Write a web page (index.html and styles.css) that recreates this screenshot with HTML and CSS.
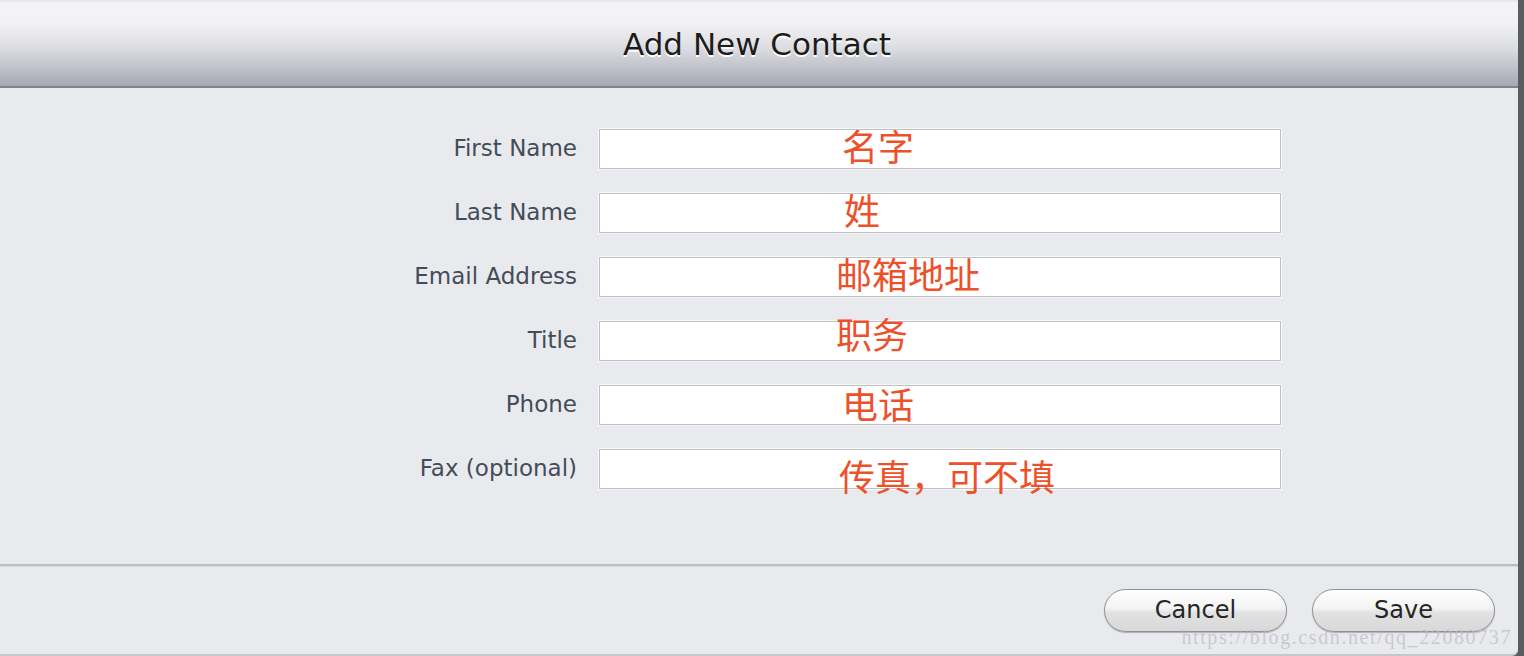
FILE: index.html
```html
<!DOCTYPE html>
<html lang="zh-CN">
<head>
    <meta charset="UTF-8">
    <meta name="viewport" content="width=device-width, initial-scale=1.0">
    <title>Add New Contact</title>
    <link rel="stylesheet" href="styles.css">
</head>
<body>
    <div class="dialog">
        <div class="dialog-header">
            <h1>Add New Contact</h1>
        </div>

        <form class="contact-form">
            <label class="field-label" for="firstName">First Name</label>
            <div class="field">
                <input type="text" id="firstName">
                <span class="note note-first">名字</span>
            </div>

            <label class="field-label" for="lastName">Last Name</label>
            <div class="field">
                <input type="text" id="lastName">
                <span class="note note-last">姓</span>
            </div>

            <label class="field-label" for="email">Email Address</label>
            <div class="field">
                <input type="text" id="email">
                <span class="note note-email">邮箱地址</span>
            </div>

            <label class="field-label" for="title">Title</label>
            <div class="field">
                <input type="text" id="title">
                <span class="note note-title">职务</span>
            </div>

            <label class="field-label" for="phone">Phone</label>
            <div class="field">
                <input type="text" id="phone">
                <span class="note note-phone">电话</span>
            </div>

            <label class="field-label" for="fax">Fax (optional)</label>
            <div class="field">
                <input type="text" id="fax">
                <span class="note note-fax">传真，可不填</span>
            </div>
        </form>

        <div class="dialog-footer">
            <button class="pill-button" type="button">Cancel</button>
            <button class="pill-button" type="button">Save</button>
            <span class="watermark">https://blog.csdn.net/qq_22080737</span>
        </div>
    </div>
</body>
</html>
```

FILE: styles.css
```css
* {
    margin: 0;
    padding: 0;
    box-sizing: border-box;
}

body {
    background: #5b5c60;
    font-family: 'DejaVu Sans', 'Noto Sans CJK SC', sans-serif;
    height: 656px;
    overflow: hidden;
}

.dialog {
    width: 1518px;
    height: 656px;
    background: #e9eaee;
    border-top: 2px solid #e8e9ec;
    border-bottom: 2px solid #c6c7ca;
    border-bottom-right-radius: 6px;
    display: flex;
    flex-direction: column;
}

.dialog-header {
    height: 86px;
    background: linear-gradient(to bottom, #f4f4f6 0%, #f2f2f4 25%, #dcdde1 55%, #bfc0c8 80%, #a5a7b2 100%);
    border-bottom: 2px solid #80838c;
    display: flex;
    align-items: center;
    justify-content: center;
}

.dialog-header h1 {
    font-size: 31px;
    font-weight: normal;
    color: #1c1c1c;
    text-shadow: 0 2px 0 #ffffff;
    margin-left: -4px;
}

.contact-form {
    display: grid;
    grid-template-columns: 577px 682px;
    grid-auto-rows: 40px;
    column-gap: 22px;
    row-gap: 24px;
    padding: 41px 0 0;
    height: 476px;
}

.field-label {
    font-size: 23px;
    color: #434c59;
    text-align: right;
    align-self: center;
    margin-top: -3px;
}

.field {
    position: relative;
}

.field input {
    width: 100%;
    height: 40px;
    border: 1px solid #c0c0c0;
    box-shadow: 0 0 0 1px #f8f8fa;
    background: #ffffff;
    outline: none;
}

.note {
    position: absolute;
    font-family: 'Noto Sans CJK SC', sans-serif;
    font-size: 36px;
    line-height: 36px;
    color: #ec512b;
    white-space: nowrap;
}

.note-first { left: 243px; top: -2px; }
.note-last { left: 245px; top: -2px; }
.note-email { left: 237px; top: -2px; }
.note-title { left: 237px; top: -6px; }
.note-phone { left: 243px; top: 0; }
.note-fax { left: 240px; top: 8px; }

.dialog-footer {
    flex: 1;
    border-top: 2px solid #babdc2;
    box-shadow: inset 0 1px 0 #d8dade;
    display: flex;
    justify-content: flex-end;
    align-items: center;
    gap: 25px;
    padding: 0 23px 0 0;
    position: relative;
}

.pill-button {
    width: 183px;
    height: 43px;
    border: 1px solid #8f9093;
    border-radius: 22px;
    background: linear-gradient(to bottom, #ffffff 0%, #f3f3f3 45%, #e2e2e2 55%, #d8d8d8 100%);
    box-shadow: 0 1px 1px rgba(0, 0, 0, 0.25);
    font-family: 'DejaVu Sans', sans-serif;
    font-size: 24px;
    color: #262626;
    cursor: pointer;
}

.watermark {
    position: absolute;
    right: 6px;
    bottom: 5px;
    font-family: 'Liberation Serif', serif;
    font-size: 20px;
    color: rgba(190, 190, 195, 0.75);
    letter-spacing: 1.6px;
}
```
